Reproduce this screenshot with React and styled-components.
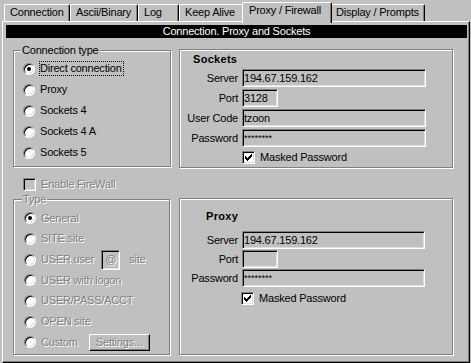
import React from "react";
import styled, { createGlobalStyle } from "styled-components";

const GlobalStyle = createGlobalStyle`
  html, body {
    margin: 0;
    padding: 0;
    background: #c0c0c0;
  }
`;

const Window = styled.div`
  width: 471px;
  height: 363px;
  overflow: hidden;
  background: #c0c0c0;
  color: #000;
  font-family: "Liberation Sans", Arial, sans-serif;
  font-size: 11px;
  line-height: 13px;
  letter-spacing: -0.2px;
`;

const TabStrip = styled.div`
  display: flex;
  align-items: flex-end;
  height: 21px;
  padding-left: 4px;
`;

const Tab = styled.div`
  box-sizing: border-box;
  flex: none;
  width: ${(p) => p.$w}px;
  height: ${(p) => (p.$active ? 21 : 17)}px;
  margin: ${(p) => (p.$active ? "0 -2px -2px" : "0")};
  padding: 1px 0 0 ${(p) => (p.$active ? 6 : 5)}px;
  border-top: 1px solid #fff;
  border-left: 1px solid #fff;
  border-right: 1px solid #000;
  border-radius: 2px 2px 0 0;
  box-shadow: inset -1px 0 0 #808080;
  background: #c0c0c0;
  white-space: nowrap;
  position: ${(p) => (p.$active ? "relative" : "static")};
  z-index: ${(p) => (p.$active ? 1 : "auto")};
`;

const Page = styled.div`
  box-sizing: border-box;
  width: 468px;
  height: 342px;
  margin-left: 2px;
  padding: 3px 2px 0 3px;
  border-top: 1px solid #fff;
  border-left: 1px solid #fff;
  border-right: 1px solid #000;
  border-bottom: 1px solid #000;
  box-shadow: inset -1px -1px 0 #808080;
`;

const TitleBar = styled.div`
  height: 13px;
  background: #000;
  color: #fff;
  text-align: center;
  line-height: 13px;
`;

const Columns = styled.div`
  display: flex;
  gap: 8px;
  padding-left: 7px;
`;

const Column = styled.div`
  display: flex;
  flex-direction: column;
`;

const Group = styled.div`
  position: relative;
  box-sizing: border-box;
  width: ${(p) => p.$w}px;
  height: ${(p) => p.$h}px;
  margin-top: ${(p) => p.$mt}px;
  padding: ${(p) => p.$pad};
  border: 1px solid #808080;
  box-shadow: 1px 1px 0 #fff, inset 1px 1px 0 #fff;
`;

const Legend = styled.span`
  position: absolute;
  top: -7px;
  left: ${(p) => p.$left}px;
  padding: 0 1px;
  background: #c0c0c0;
  line-height: 13px;
  white-space: nowrap;
  color: ${(p) => (p.$disabled ? "#808080" : "#000")};
  text-shadow: ${(p) => (p.$disabled ? "1px 1px 0 #fff" : "none")};
`;

const OptionRow = styled.div`
  display: flex;
  align-items: center;
  height: ${(p) => p.$h}px;
`;

const RadioCircle = styled.span`
  box-sizing: border-box;
  flex: none;
  width: 12px;
  height: 12px;
  border-radius: 50%;
  border: 1px solid;
  border-color: #808080 #fff #fff #808080;
  box-shadow: inset 1px 1px 0 #000, inset -1px -1px 0 #dfdfdf;
  background: #fff;
  display: flex;
  align-items: center;
  justify-content: center;

  &::after {
    content: "";
    display: ${(p) => (p.$checked ? "block" : "none")};
    width: 4px;
    height: 4px;
    border-radius: 50%;
    background: #000;
  }
`;

const OptionLabel = styled.span`
  margin-left: 4px;
  padding-right: 1px;
  border: 1px dotted ${(p) => (p.$focused ? "#000" : "transparent")};
  line-height: 13px;
  white-space: nowrap;
  color: ${(p) => (p.$disabled ? "#808080" : "#000")};
  text-shadow: ${(p) => (p.$disabled ? "1px 1px 0 #fff" : "none")};
`;

const Muted = styled.span`
  margin-left: ${(p) => p.$ml || 0}px;
  white-space: nowrap;
  color: #808080;
  text-shadow: 1px 1px 0 #fff;
`;

const AtBox = styled.span`
  box-sizing: border-box;
  width: 19px;
  height: 20px;
  margin-left: 5px;
  border: 1px solid;
  border-color: #808080 #fff #fff #808080;
  box-shadow: inset 1px 1px 0 #000, inset -1px -1px 0 #dfdfdf;
  display: flex;
  align-items: center;
  justify-content: center;
  color: #808080;
  text-shadow: 1px 1px 0 #fff;
`;

const PushButton = styled.span`
  box-sizing: border-box;
  width: 61px;
  height: 17px;
  margin-left: ${(p) => p.$ml}px;
  border: 1px solid;
  border-color: #fff #000 #000 #fff;
  box-shadow: inset -1px -1px 0 #808080;
  display: flex;
  align-items: center;
  justify-content: center;
  color: #808080;
  text-shadow: 1px 1px 0 #fff;
`;

const CheckRow = styled.div`
  display: flex;
  align-items: center;
  height: 13px;
  margin: ${(p) => p.$mt || 0}px 0 0 ${(p) => p.$ml}px;
`;

const CheckBox = styled.span`
  box-sizing: border-box;
  flex: none;
  width: 13px;
  height: 13px;
  border: 1px solid;
  border-color: #808080 #fff #fff #808080;
  box-shadow: inset 1px 1px 0 #000, inset -1px -1px 0 #dfdfdf;
  background: ${(p) => (p.$disabled ? "#c0c0c0" : "#fff")};
  display: flex;
  align-items: center;
  justify-content: center;
`;

const CheckLabel = styled.span`
  margin-left: 5px;
  white-space: nowrap;
  color: ${(p) => (p.$disabled ? "#808080" : "#000")};
  text-shadow: ${(p) => (p.$disabled ? "1px 1px 0 #fff" : "none")};
`;

const SectionTitle = styled.div`
  margin: ${(p) => p.$mt}px 0 ${(p) => p.$mb}px ${(p) => p.$indent}px;
  font-weight: bold;
  letter-spacing: 0.3px;
  line-height: 13px;
`;

const FieldList = styled.div`
  display: flex;
  flex-direction: column;
  gap: ${(p) => p.$gap}px;
`;

const FieldRow = styled.div`
  display: flex;
  align-items: center;
  height: 18px;
`;

const FieldLabel = styled.span`
  width: 58px;
  margin-right: 4px;
  text-align: right;
  white-space: nowrap;
`;

const TextBox = styled.input`
  box-sizing: border-box;
  width: ${(p) => p.$w}px;
  height: 18px;
  margin: 0;
  padding: 0 1px;
  border: 1px solid;
  border-color: #808080 #fff #fff #808080;
  box-shadow: inset 1px 1px 0 #000, inset -1px -1px 0 #dfdfdf;
  border-radius: 0;
  background: #c0c0c0;
  color: #000;
  font-family: inherit;
  font-size: ${(p) => (p.$small ? 9 : 11)}px;
  letter-spacing: ${(p) => (p.$small ? 0 : -0.2)}px;
  outline: none;
`;

const CheckMark = () => (
  <svg width="7" height="7" viewBox="0 0 7 7" shapeRendering="crispEdges">
    <path
      fill="#000"
      d="M6 0h1v1h-1z M5 1h2v1h-2z M0 2h1v1h-1z M4 2h3v1h-3z M0 3h2v1h-2z M3 3h3v1h-3z M0 4h5v1h-5z M1 5h3v1h-3z M2 6h1v1h-1z"
    />
  </svg>
);

const Radio = ({ label, checked, focused, disabled, h, children }) => (
  <OptionRow $h={h}>
    <RadioCircle $checked={checked} />
    <OptionLabel $focused={focused} $disabled={disabled}>
      {label}
    </OptionLabel>
    {children}
  </OptionRow>
);

const Check = ({ label, checked, disabled, ml, mt }) => (
  <CheckRow $ml={ml} $mt={mt}>
    <CheckBox $disabled={disabled}>{checked && <CheckMark />}</CheckBox>
    <CheckLabel $disabled={disabled}>{label}</CheckLabel>
  </CheckRow>
);

const tabs = [
  { label: "Connection", w: 66 },
  { label: "Ascii/Binary", w: 68 },
  { label: "Log", w: 41 },
  { label: "Keep Alive", w: 65 },
  { label: "Proxy / Firewall", w: 90, active: true },
  { label: "Display / Prompts", w: 95 },
];

const connectionTypes = [
  "Direct connection",
  "Proxy",
  "Sockets 4",
  "Sockets 4 A",
  "Sockets 5",
];

const stars = "********";

const App = () => {
  return (
    <>
      <GlobalStyle />
      <Window>
        <TabStrip>
          {tabs.map((t) => (
            <Tab key={t.label} $w={t.w} $active={t.active}>
              {t.label}
            </Tab>
          ))}
        </TabStrip>

        <Page>
          <TitleBar>Connection. Proxy and Sockets</TitleBar>

          <Columns>
            <Column>
              <Group $w={158} $h={117} $mt={12} $pad="7px 0 0 9px">
                <Legend $left={7}>Connection type</Legend>
                {connectionTypes.map((c, i) => (
                  <Radio
                    key={c}
                    h={21}
                    label={c}
                    checked={i === 0}
                    focused={i === 0}
                  />
                ))}
              </Group>

              <Check label="Enable FireWall" disabled ml={10} mt={11} />

              <Group $w={157} $h={156} $mt={8} $pad="8px 0 0 10px">
                <Legend $left={8} $disabled>
                  Type
                </Legend>
                <Radio h={20.67} label="General" checked disabled />
                <Radio h={20.67} label="SITE site" disabled />
                <Radio h={20.67} label="USER user" disabled>
                  <AtBox>@</AtBox>
                  <Muted $ml={9}>site</Muted>
                </Radio>
                <Radio h={20.67} label="USER with logon" disabled />
                <Radio h={20.67} label="USER/PASS/ACCT" disabled />
                <Radio h={20.67} label="OPEN site" disabled />
                <Radio h={20.67} label="Custom" disabled>
                  <PushButton $ml={9}>Settings...</PushButton>
                </Radio>
              </Group>
            </Column>

            <Column>
              <Group $w={274} $h={119} $mt={11} $pad="0">
                <SectionTitle $mt={3} $mb={3} $indent={13}>
                  Sockets
                </SectionTitle>
                <FieldList $gap={2}>
                  <FieldRow>
                    <FieldLabel>Server</FieldLabel>
                    <TextBox $w={184} value="194.67.159.162" readOnly />
                  </FieldRow>
                  <FieldRow>
                    <FieldLabel>Port</FieldLabel>
                    <TextBox $w={36} value="3128" readOnly />
                  </FieldRow>
                  <FieldRow>
                    <FieldLabel>User Code</FieldLabel>
                    <TextBox $w={184} value="tzoon" readOnly />
                  </FieldRow>
                  <FieldRow>
                    <FieldLabel>Password</FieldLabel>
                    <TextBox $w={184} $small value={stars} readOnly />
                  </FieldRow>
                </FieldList>
                <Check label="Masked Password" checked ml={62} mt={4} />
              </Group>

              <Group $w={274} $h={157} $mt={30} $pad="0">
                <SectionTitle $mt={11} $mb={8} $indent={26}>
                  Proxy
                </SectionTitle>
                <FieldList $gap={1}>
                  <FieldRow>
                    <FieldLabel>Server</FieldLabel>
                    <TextBox $w={183} value="194.67.159.162" readOnly />
                  </FieldRow>
                  <FieldRow>
                    <FieldLabel>Port</FieldLabel>
                    <TextBox $w={36} value="" readOnly />
                  </FieldRow>
                  <FieldRow>
                    <FieldLabel>Password</FieldLabel>
                    <TextBox $w={183} $small value={stars} readOnly />
                  </FieldRow>
                </FieldList>
                <Check label="Masked Password" checked ml={61} mt={5} />
              </Group>
            </Column>
          </Columns>
        </Page>
      </Window>
    </>
  );
};

export default App;
